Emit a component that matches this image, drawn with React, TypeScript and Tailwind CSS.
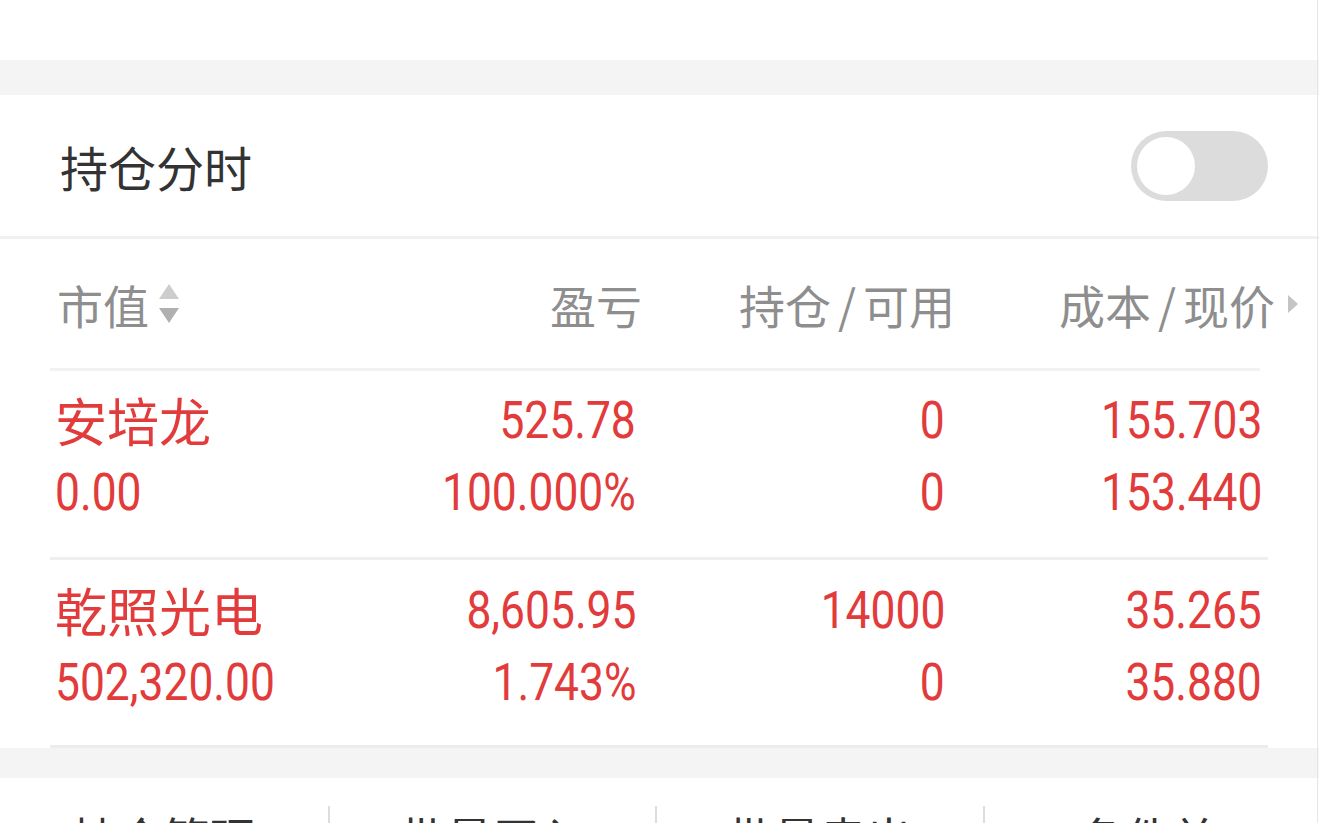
import React from "react";

const CJK = "font-['Noto_Sans_CJK_SC','Noto_Sans',sans-serif]";
const NUM = "font-['Roboto','Noto_Sans_CJK_SC',sans-serif]";

function Num({ children, left = false }: { children: React.ReactNode; left?: boolean }) {
  return (
    <span
      className={`${NUM} inline-block text-[51px] leading-none text-[#e23b3b] scale-x-[0.87] ${
        left ? "origin-left" : "origin-right"
      }`}
    >
      {children}
    </span>
  );
}

function SortIcon() {
  return (
    <svg width="24" height="40" viewBox="0 0 24 40" className="ml-[8px]">
      <polygon points="12,0 22,15 2,15" fill="#cdcdcd" />
      <polygon points="2,24 22,24 12,39" fill="#b0b0b0" />
    </svg>
  );
}

type Row = {
  name: string;
  mv: string;
  pl: string;
  plPct: string;
  hold: string;
  avail: string;
  cost: string;
  price: string;
};

const rows: Row[] = [
  {
    name: "安培龙",
    mv: "0.00",
    pl: "525.78",
    plPct: "100.000%",
    hold: "0",
    avail: "0",
    cost: "155.703",
    price: "153.440",
  },
  {
    name: "乾照光电",
    mv: "502,320.00",
    pl: "8,605.95",
    plPct: "1.743%",
    hold: "14000",
    avail: "0",
    cost: "35.265",
    price: "35.880",
  },
];

function DataRow({ r, pt }: { r: Row; pt: string }) {
  return (
    <div className={`flex h-[186px] ${pt}`}>
      <div className="w-[55px]" />
      <div className="flex w-[345px] flex-col">
        <div className="flex h-[72px] items-center">
          <span className={`${CJK} text-[52px] leading-none text-[#e23b3b]`}>{r.name}</span>
        </div>
        <div className="flex h-[72px] items-center">
          <Num left>{r.mv}</Num>
        </div>
      </div>
      <div className="flex w-[236px] flex-col items-end">
        <div className="flex h-[72px] items-center">
          <Num>{r.pl}</Num>
        </div>
        <div className="flex h-[72px] items-center">
          <Num>{r.plPct}</Num>
        </div>
      </div>
      <div className="flex w-[309px] flex-col items-end">
        <div className="flex h-[72px] items-center">
          <Num>{r.hold}</Num>
        </div>
        <div className="flex h-[72px] items-center">
          <Num>{r.avail}</Num>
        </div>
      </div>
      <div className="flex w-[317px] flex-col items-end">
        <div className="flex h-[72px] items-center">
          <Num>{r.cost}</Num>
        </div>
        <div className="flex h-[72px] items-center">
          <Num>{r.price}</Num>
        </div>
      </div>
    </div>
  );
}

export default function App() {
  return (
    <div className={`${CJK} relative h-[823px] w-[1319px] overflow-hidden bg-white`}>
      {/* top white remnant */}
      <div className="h-[60px] bg-white" />
      {/* gray gap */}
      <div className="h-[35px] bg-[#f4f4f4]" />

      {/* 持仓分时 */}
      <div className="flex h-[141px] items-center justify-between pl-[60px] pr-[51px]">
        <span className="text-[48px] leading-none text-[#333333]">持仓分时</span>
        <div className="flex h-[70px] w-[137px] items-center rounded-full bg-[#dcdcdc] px-[6px]">
          <div className="h-[58px] w-[58px] rounded-full bg-white" />
        </div>
      </div>
      <div className="h-[3px] bg-[#f0f0f0]" />

      {/* header */}
      <div className="flex h-[129px] items-center text-[46px] leading-none text-[#8e8e8e]">
        <div className="w-[57px]" />
        <div className="flex w-[343px] items-center">
          <span>市值</span>
          <SortIcon />
        </div>
        <div className="flex w-[242px] justify-end">
          <span>盈亏</span>
        </div>
        <div className="flex w-[313px] justify-end">
          <span>
            持仓<span className="mx-[7px]">/</span>可用
          </span>
        </div>
        <div className="flex w-[320px] justify-end">
          <span>
            成本<span className="mx-[7px]">/</span>现价
          </span>
        </div>
        <svg width="12" height="18" viewBox="0 0 12 18" className="ml-[12px]">
          <polygon points="1,0 11,9 1,18" fill="#c4c4c4" />
        </svg>
      </div>
      <div className="ml-[50px] h-[3px] w-[1210px] bg-[#f2f2f2]" />

      <DataRow r={rows[0]} pt="pt-[13px]" />
      <div className="ml-[50px] h-[3px] w-[1218px] bg-[#efefef]" />
      <div className="h-[185px]">
        <DataRow r={rows[1]} pt="pt-[14px]" />
      </div>
      <div className="ml-[50px] h-[3px] w-[1218px] bg-[#ececec]" />

      {/* gray gap */}
      <div className="h-[30px] bg-[#f4f4f4]" />

      {/* bottom actions */}
      <div className="flex h-[120px] bg-white pt-[28px] text-[46px] leading-[60px] text-[#333333]">
        <div className="flex w-[328px] justify-center">持仓管理</div>
        <div className="flex w-[327px] justify-center border-l-2 border-[#dddddd]">批量买入</div>
        <div className="flex w-[328px] justify-center border-l-2 border-[#dddddd]">批量卖出</div>
        <div className="flex w-[328px] justify-center border-l-2 border-[#dddddd]">条件单</div>
      </div>

      {/* right edge line */}
      <div className="absolute right-[1px] top-0 h-full w-[1px] bg-[#e6e6e6]" />
    </div>
  );
}
